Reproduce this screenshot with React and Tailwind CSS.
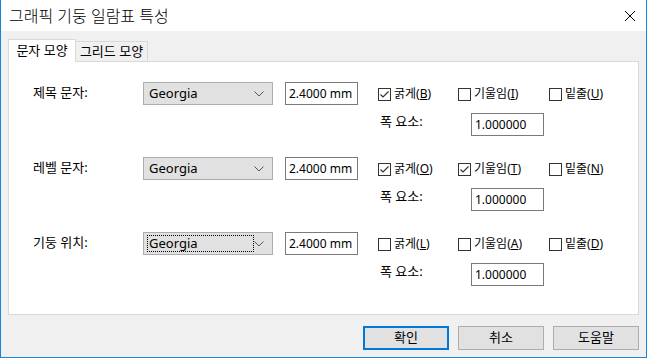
import { useState } from "react";

const font = { fontFamily: '"Noto Sans", "Noto Sans CJK KR", sans-serif' };

function Check({ checked, label, hot }) {
  return (
    <label className="flex items-center gap-[3px] h-[16px]">
      <span className="w-[13px] h-[13px] border border-[#333] bg-white flex items-center justify-center">
        {checked && (
          <svg width="11" height="11" viewBox="0 0 11 11">
            <path d="M1.5 5.5 L4 8 L9.5 2.5" stroke="#333" strokeWidth="1.2" fill="none" />
          </svg>
        )}
      </span>
      <span className="text-[12px]">
        {label}(<span className="underline">{hot}</span>)
      </span>
    </label>
  );
}

function Group({ title, checks, focused }) {
  return (
    <div className="flex">
      <div className="w-[110px] pt-[1px]">{title}</div>
      <div className="w-[130px] h-[23px] bg-[#e1e1e1] border border-[#adadad] flex items-center pl-[3px] pr-[8px] justify-between">
        <span className={focused ? "border border-dotted border-black px-[1px] w-[108px] h-[17px] leading-[15px]" : "pl-[2px]"}>
          Georgia
        </span>
        <svg width="10" height="6" viewBox="0 0 10 6">
          <path d="M0.5 0.5 L5 5 L9.5 0.5" stroke="#555" fill="none" />
        </svg>
      </div>
      <div className="ml-[12px] w-[73px] h-[23px] border border-[#7a7a7a] bg-white pl-[3px] flex items-center text-[12px]">
        2.4000 mm
      </div>
      <div className="ml-[20px] flex flex-col">
        <div className="flex pt-[4px]">
          <div className="w-[80px]"><Check {...checks[0]} /></div>
          <div className="w-[91px]"><Check {...checks[1]} /></div>
          <div><Check {...checks[2]} /></div>
        </div>
        <div className="flex mt-[11px]">
          <div className="w-[93px] pl-[2px] -mt-[1px]">폭 요소:</div>
          <div className="w-[73px] h-[23px] border border-[#7a7a7a] bg-white pl-[3px] flex items-center text-[12px]">
            1.000000
          </div>
        </div>
      </div>
    </div>
  );
}

export default function App() {
  const [tab, setTab] = useState(0);
  const groups = [
    {
      title: "제목 문자:",
      checks: [
        { checked: true, label: "굵게", hot: "B" },
        { checked: false, label: "기울임", hot: "I" },
        { checked: false, label: "밑줄", hot: "U" },
      ],
    },
    {
      title: "레벨 문자:",
      checks: [
        { checked: true, label: "굵게", hot: "O" },
        { checked: true, label: "기울임", hot: "T" },
        { checked: false, label: "밑줄", hot: "N" },
      ],
    },
    {
      title: "기둥 위치:",
      focused: true,
      checks: [
        { checked: false, label: "굵게", hot: "L" },
        { checked: false, label: "기울임", hot: "A" },
        { checked: false, label: "밑줄", hot: "D" },
      ],
    },
  ];

  return (
    <div className="w-[647px] h-[358px] border border-t-0 border-[#1883d7] flex flex-col text-[13px] text-black" style={font}>
      <div className="h-[31px] bg-white flex items-center justify-between pl-[8px] pr-[10px]">
        <span className="text-[16px] font-light">그래픽 기둥 일람표 특성</span>
        <svg width="12" height="12" viewBox="0 0 12 12">
          <path d="M1 1 L11 11 M11 1 L1 11" stroke="#000" strokeWidth="1" />
        </svg>
      </div>
      <div className="flex-1 bg-[#f0f0f0] px-[7px] flex flex-col">
        <div className="flex items-end h-[30px]">
          <button
            onClick={() => setTab(0)}
            className="h-[23px] w-[68px] bg-white border border-b-0 border-[#d9d9d9] relative top-[1px] z-10 flex items-start justify-center pt-[1px]"
          >
            문자 모양
          </button>
          <button
            onClick={() => setTab(1)}
            className="h-[20px] w-[72px] bg-[#f0f0f0] border border-l-0 border-b-0 border-[#d9d9d9] flex items-center justify-center"
          >
            그리드 모양
          </button>
        </div>
        <div className="h-[254px] bg-white border border-[#d9d9d9] pl-[24px] pt-[20px] flex flex-col gap-[21px]">
          {tab === 0 && groups.map((g) => <Group key={g.title} {...g} />)}
        </div>
        <div className="flex justify-end gap-[9px] mt-[11px]">
          <button className="w-[86px] h-[24px] bg-[#e1e1e1] border-2 border-[#0078d7]">확인</button>
          <button className="w-[86px] h-[24px] bg-[#e1e1e1] border border-[#adadad]">취소</button>
          <button className="w-[86px] h-[24px] bg-[#e1e1e1] border border-[#adadad]">도움말</button>
        </div>
      </div>
    </div>
  );
}
